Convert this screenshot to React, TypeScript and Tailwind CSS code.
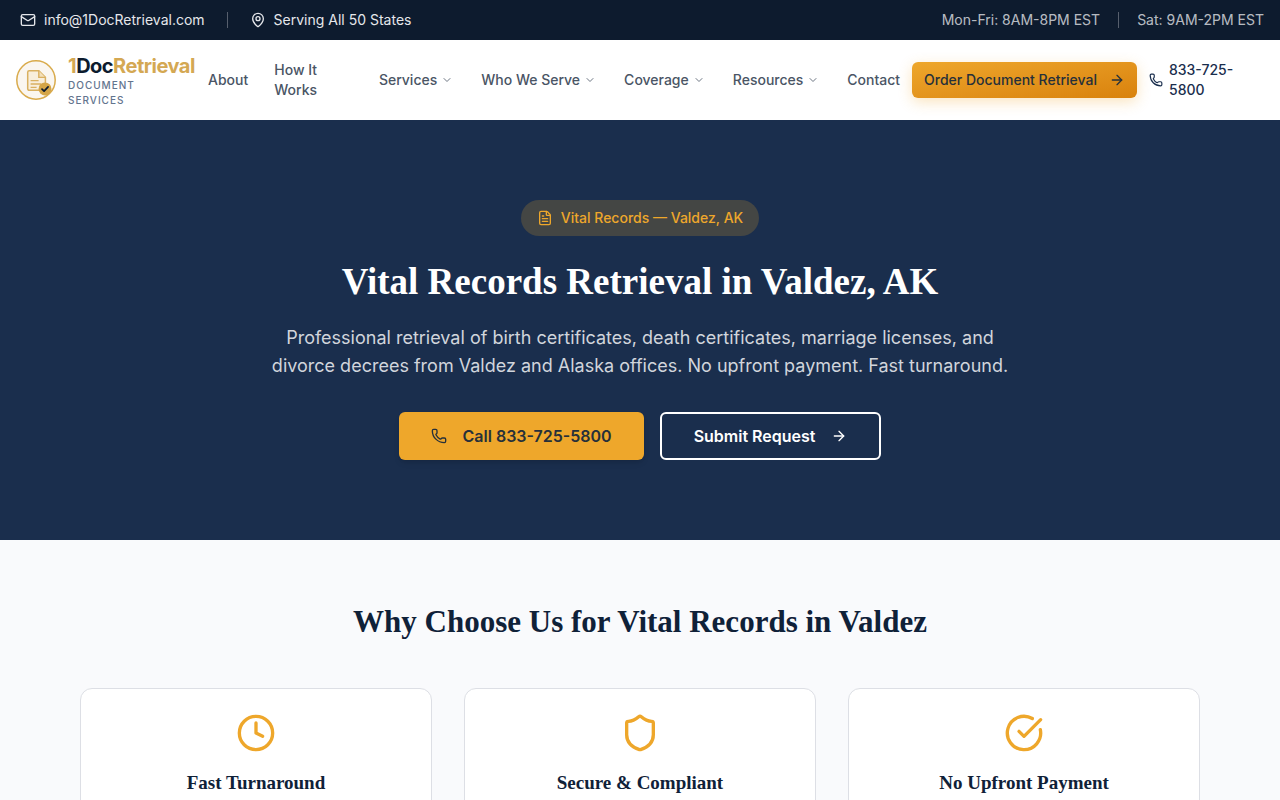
import {
  ArrowRight,
  ChevronDown,
  CircleCheckBig,
  Clock,
  FileText,
  Mail,
  MapPin,
  Phone,
  Shield,
} from "lucide-react";

const navItems = [
  { label: "About" },
  { label: "How It Works", wrap: true },
  { label: "Services", menu: true },
  { label: "Who We Serve", menu: true },
  { label: "Coverage", menu: true },
  { label: "Resources", menu: true },
  { label: "Contact" },
];

const features = [
  { title: "Fast Turnaround", icon: Clock },
  { title: "Secure & Compliant", icon: Shield },
  { title: "No Upfront Payment", icon: CircleCheckBig },
];

function LogoMark() {
  return (
    <svg className="h-10 w-10 shrink-0" viewBox="0 0 40 40" fill="none" aria-hidden="true">
      <circle cx="20" cy="20" r="19.2" fill="#faf6f0" stroke="#d9ab4c" strokeWidth="1.5" />
      <path
        d="M13.2 10.8h9.6l6.6 6.6v11.4a1.5 1.5 0 0 1-1.5 1.5H13.2a1.5 1.5 0 0 1-1.5-1.5V12.3a1.5 1.5 0 0 1 1.5-1.5Z"
        fill="#f8eedb"
        stroke="#d9b060"
        strokeWidth="1.5"
      />
      <path d="M22.8 10.8v6.6h6.6" fill="#f3dfb9" stroke="#d9b060" strokeWidth="1.4" />
      <path d="M14.6 20.6h8M14.6 24h10.6M14.6 27.4h6" stroke="#d9b060" strokeWidth="1.3" />
      <circle cx="29" cy="28.9" r="6.5" fill="#d4a548" />
      <path d="m26 29.1 2.1 2.1 4-4.3" stroke="#0d1b2e" strokeWidth="1.7" strokeLinecap="round" strokeLinejoin="round" />
    </svg>
  );
}

function TopBar() {
  return (
    <div className="flex h-10 items-center justify-between bg-[#0d1b2e] pl-5 pr-4 text-sm text-gray-200">
      <div className="flex items-center">
        <a href="#email" className="flex items-center gap-2">
          <Mail className="h-4 w-4" />
          info@1DocRetrieval.com
        </a>
        <span className="mx-[22px] h-4 w-px bg-white/30" />
        <span className="flex items-center gap-2">
          <MapPin className="h-4 w-4" />
          Serving All 50 States
        </span>
      </div>
      <div className="flex items-center text-gray-200/80">
        <span>Mon-Fri: 8AM-8PM EST</span>
        <span className="mx-[18px] h-4 w-px bg-white/30" />
        <span>Sat: 9AM-2PM EST</span>
      </div>
    </div>
  );
}

function Header() {
  return (
    <header className="flex h-20 items-center bg-white px-4 text-sm font-medium">
      <a href="#home" className="flex w-[180px] shrink-0 items-center gap-3">
        <LogoMark />
        <span className="pt-0.5">
          <span className="block text-xl leading-6 font-bold tracking-tight text-[#d4a853]">
            1<span className="text-[#0d1b2e]">Doc</span>Retrieval
          </span>
          <span className="block text-[10px] leading-[15px] font-medium tracking-widest text-slate-500 uppercase">
            Document
            <br />
            Services
          </span>
        </span>
      </a>
      <nav className="flex min-w-0 items-center gap-0.5 text-gray-600">
        {navItems.map((item) =>
          item.menu ? (
            <button key={item.label} type="button" className="flex shrink-0 items-center gap-1 pl-3 pr-3.5">
              {item.label}
              <ChevronDown className="h-3 w-3 opacity-80" />
            </button>
          ) : (
            <a key={item.label} href="#nav" className={item.wrap ? "min-w-0 px-3" : "shrink-0 px-3"}>
              {item.label}
            </a>
          ),
        )}
      </nav>
      <a
        href="#order"
        className="flex h-9 shrink-0 items-center gap-3 rounded-md bg-linear-to-br from-[#eea72b] to-[#d9820b] px-3 text-[#26303a] shadow-[0_4px_14px_rgba(238,167,43,0.3)]"
      >
        Order Document Retrieval
        <ArrowRight className="h-4 w-4" />
      </a>
      <a href="#phone" className="flex w-[127px] shrink-0 items-center gap-1.5 px-3 text-[#1a2e4d]">
        <Phone className="h-3.5 w-3.5 shrink-0" />
        833-725-5800
      </a>
    </header>
  );
}

function Hero() {
  return (
    <section className="flex flex-col items-center bg-[#1a2e4d] px-4 py-20 text-center">
      <p className="flex h-9 items-center gap-2 rounded-full bg-[#444644] px-4 text-sm font-medium text-[#eea72b]">
        <FileText className="h-4 w-4" />
        Vital Records — Valdez, AK
      </p>
      <h1 className="mt-6 font-['Liberation_Serif',serif] text-[37px] leading-[44px] font-bold text-white">
        Vital Records Retrieval in Valdez, AK
      </h1>
      <p className="mt-5 max-w-3xl text-lg leading-7 text-gray-300">
        Professional retrieval of birth certificates, death certificates, marriage licenses, and divorce decrees
        from Valdez and Alaska offices. No upfront payment. Fast turnaround.
      </p>
      <div className="mt-8 flex gap-4 font-semibold">
        <a href="#call" className="flex h-12 items-center gap-4 rounded-md bg-[#eea72b] px-8 text-[#26303a] shadow-md">
          <Phone className="h-4 w-4" />
          Call 833-725-5800
        </a>
        <a href="#request" className="flex h-12 items-center gap-4 rounded-md border-2 border-white px-8 text-white">
          Submit Request
          <ArrowRight className="h-4 w-4" />
        </a>
      </div>
    </section>
  );
}

function WhyChooseUs() {
  return (
    <section className="bg-[#f9fafc] px-4 py-16 text-[#0f2138]">
      <h2 className="text-center font-['Liberation_Serif',serif] text-[31px] leading-9 font-bold">
        Why Choose Us for Vital Records in Valdez
      </h2>
      <div className="mx-auto mt-12 grid max-w-[1120px] grid-cols-3 gap-8">
        {features.map(({ title, icon: Icon }) => (
          <article key={title} className="rounded-xl border border-[#dddfe5] bg-white p-6 text-center">
            <Icon className="mx-auto h-10 w-10 text-[#eea72b]" />
            <h3 className="mt-4 font-['Liberation_Serif',serif] text-[19px] leading-7 font-bold">{title}</h3>
          </article>
        ))}
      </div>
    </section>
  );
}

export default function App() {
  return (
    <div className="min-h-screen bg-[#f9fafc] font-['Inter',sans-serif]">
      <TopBar />
      <Header />
      <main>
        <Hero />
        <WhyChooseUs />
      </main>
    </div>
  );
}
